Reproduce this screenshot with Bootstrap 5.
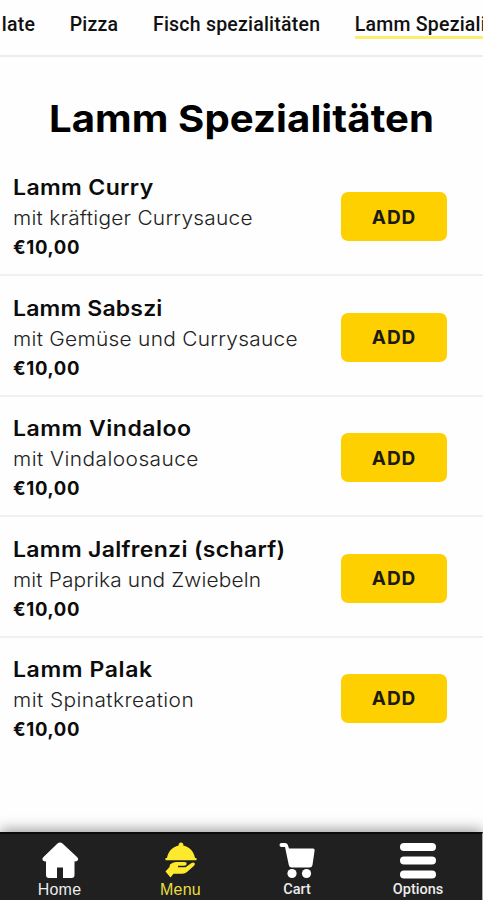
<!DOCTYPE html>
<html lang="de">
<head>
<meta charset="utf-8">
<meta name="viewport" content="width=device-width, initial-scale=1">
<title>Lamm Spezialitäten</title>
<link href="https://cdn.jsdelivr.net/npm/bootstrap@5.3.0/dist/css/bootstrap.min.css" rel="stylesheet">
<style>
body{font-family:Inter,"Open Sans",sans-serif;color:#0c0c0c;background:#fefefe;height:900px}
.cat-bar{height:57px;border-bottom:2px solid #ededed;padding-left:1.8px;gap:34.6px;font:500 19.5px/24px Roboto,sans-serif;letter-spacing:.22px;padding-top:12px}
.cat-bar a{color:#111;text-decoration:none;height:24px}
.cat-bar .current{box-shadow:0 3px 0 #ffec70}
.cat-bar span{display:block;padding-top:1px;height:24px}
.page-title{font-size:37.5px;line-height:48px;font-weight:700;letter-spacing:.08px;margin:38px 0 0;color:#000;transform:scaleX(1.07)}
.dishes{margin-top:13px}
.dish{height:120.45px;padding:16.4px 36px 0 13px;border-bottom:2px solid #f1f1f1}
.dish:last-child{border:0}
.dish h2,.dish p{transform:scaleX(1.07);transform-origin:left}
.dish h2{font-size:21.5px;line-height:30px;font-weight:600;margin:0;letter-spacing:.35px}
.dish p{font-size:19.5px;line-height:32px;font-weight:300;margin:0;color:#222;letter-spacing:.23px}
.dish:nth-child(2) h2{letter-spacing:.16px}
.dish:nth-child(2) p{letter-spacing:.26px}
.dish:nth-child(3) h2{letter-spacing:.48px}
.dish:nth-child(3) p{letter-spacing:.42px}
.dish:nth-child(4) h2{letter-spacing:.3px}
.dish:nth-child(4) p{letter-spacing:.12px}
.dish:nth-child(5) h2{letter-spacing:.57px}
.dish:nth-child(5) p{letter-spacing:.4px}
.dish strong{font-size:18.5px;line-height:27px;font-weight:700;display:block;letter-spacing:.65px}
.add{width:106px;height:49px;margin-top:20px;border-radius:7px;background:#ffd000;font-size:19px;font-weight:700;color:#1b1b10;padding:2px 0 0;letter-spacing:.9px}
.add:hover{background:#f2c500}
.dock{height:68px;background:#202020;border-top:2px solid #0b0b0b;border-right:1px solid #aaa;box-shadow:0 -2px 13px rgba(0,0,0,.42);font:500 14.5px/16px Roboto,sans-serif;display:grid;grid-template-columns:119px 123px 110px 1fr}
.dock a{color:#fff;text-decoration:none;padding-top:7px}
.dock a:last-child{padding-left:2px}
.dock .current{color:#fdea2e}
.dock svg{width:40px;height:40px;fill:currentColor}
.dock span{padding-top:1px;color:#ececec}
.dock .current span{color:#eadd42}
.dock .wide{font-family:"Liberation Sans",sans-serif;font-weight:400;font-size:16px;letter-spacing:.2px}
</style>
<script src="https://cdn.jsdelivr.net/npm/bootstrap@5.3.0/dist/js/bootstrap.bundle.min.js"></script>
</head>
<body class="d-flex flex-column overflow-hidden">
<nav class="cat-bar d-flex flex-shrink-0 text-nowrap overflow-hidden">
<a href="#"><span>late</span></a><a href="#"><span>Pizza</span></a><a href="#"><span>Fisch spezialitäten</span></a><a href="#" class="current"><span>Lamm Spezialitäten</span></a>
</nav>
<main class="flex-grow-1 overflow-hidden">
<h1 class="page-title text-center text-nowrap">Lamm Spezialitäten</h1>
<div class="dishes">
<section class="dish d-flex justify-content-between align-items-start"><div class="text-nowrap"><h2>Lamm Curry</h2><p>mit kräftiger Currysauce</p><strong>€10,00</strong></div><button class="btn add">ADD</button></section>
<section class="dish d-flex justify-content-between align-items-start"><div class="text-nowrap"><h2>Lamm Sabszi</h2><p>mit Gemüse und Currysauce</p><strong>€10,00</strong></div><button class="btn add">ADD</button></section>
<section class="dish d-flex justify-content-between align-items-start"><div class="text-nowrap"><h2>Lamm Vindaloo</h2><p>mit Vindaloosauce</p><strong>€10,00</strong></div><button class="btn add">ADD</button></section>
<section class="dish d-flex justify-content-between align-items-start"><div class="text-nowrap"><h2>Lamm Jalfrenzi (scharf)</h2><p>mit Paprika und Zwiebeln</p><strong>€10,00</strong></div><button class="btn add">ADD</button></section>
<section class="dish d-flex justify-content-between align-items-start"><div class="text-nowrap"><h2>Lamm Palak</h2><p>mit Spinatkreation</p><strong>€10,00</strong></div><button class="btn add">ADD</button></section>
</div>
</main>
<footer class="dock flex-shrink-0 position-relative">
<a href="#" class="d-flex flex-column align-items-center"><svg viewBox="0 0 40 40"><path d="M20 1.500q1.300 0 2.500 1L37 16q2 2 .5 3.500-.7.900-3 .9V34q0 3-3 3h-8.500V26.500h-6V37H9q-3 0-3-3V20.400q-2.300 0-3-.9Q1.500 18 3.500 16l14-13.500q1.200-1 2.500-1z"/></svg><span class="wide">Home</span></a>
<a href="#" class="current d-flex flex-column align-items-center"><svg viewBox="0 0 40 40"><path d="M20 1.500a2.400 2.400 0 0 1 2.300 3.100C29 6 33 11 34 17h1.500v2.300H4.500V17H6C7 11 11 6 17.700 4.600A2.400 2.400 0 0 1 20 1.500z"/><path d="M4.500 30.500 8.500 26l.5-2.500q3-3 7-2.500h7.500q2.500.2 2.200 2-.3 1.700-2.400 1.700H17v1.500h7.500l6-4.200q2-1.200 3 0 1 1.200-.5 2.800l-7 6.200q-2 1.800-4.500 1.800h-9L9.500 36.500z"/></svg><span class="wide">Menu</span></a>
<a href="#" class="d-flex flex-column align-items-center"><svg viewBox="0 0 40 40"><path d="M4.500 2H8q2.500 0 3.200 3l.8 2.500h24q2 0 1.600 2L35.500 24q-.5 2.500-3 2.500H14.800q-2.600 0-3-2.500L8 6H4.500q-2 0-2-2t2-2z"/><circle cx="15" cy="32.500" r="4.600"/><circle cx="29.500" cy="32.500" r="4.600"/></svg><span>Cart</span></a>
<a href="#" class="d-flex flex-column align-items-center"><svg viewBox="0 0 40 40"><rect x="2" y="2" width="36" height="8" rx="4"/><rect x="2" y="15.500" width="36" height="8" rx="4"/><rect x="2" y="29.500" width="36" height="8" rx="4"/></svg><span>Options</span></a>
</footer>
</body>
</html>
